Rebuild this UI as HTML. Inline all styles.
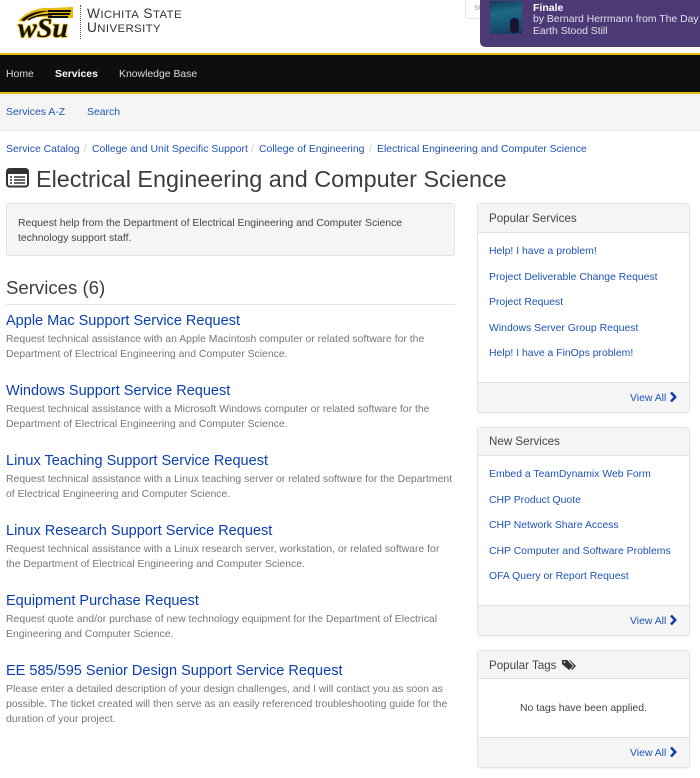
<!DOCTYPE html>
<html><head><meta charset="utf-8"><style>
html,body{margin:0;padding:0;background:#fff}
body{width:700px;height:778px;overflow:hidden;position:relative;font-family:"Liberation Sans",sans-serif;color:#444}
.t{position:absolute;white-space:nowrap;line-height:15px;font-size:10.43px}
.l{color:#1f53b5}
.h{color:#0b3fb0;font-size:14.52px;line-height:18px}
.g{color:#777}
.bt{font-size:11.6px}
.box{position:absolute;left:477px;width:213px;background:#fff;border:1px solid #e2e2e2;border-radius:3px;box-sizing:border-box;box-shadow:0 1px 1px rgba(0,0,0,.05)}
.bh{position:absolute;left:0;right:0;top:0;height:28px;background:#f5f5f5;border-bottom:1px solid #e2e2e2;box-sizing:border-box}
.bf{position:absolute;left:0;right:0;bottom:0;height:30px;background:#f5f5f5;border-top:1px solid #e2e2e2;box-sizing:border-box}
</style></head><body>
<svg style="position:absolute;left:16px;top:5px" width="60" height="40" viewBox="0 0 60 40">
<path d="M2 16C10 7 22 2 34 3L57 2 57 13 34 13C26 11 16 12 8 17Z" fill="#e8b90f"/>
<path d="M5 15C13 8 23 5 33 6C25 7 15 10 8 16Z" fill="#111"/>
<path d="M12 15C20 10 28 9 36 10" stroke="#111" stroke-width="1.6" fill="none"/>
<path d="M32 6h23M32 9h22M32 12h20" stroke="#111" stroke-width="2"/>
<text x="2" y="32" font-family="Liberation Serif,serif" font-weight="bold" font-style="italic" font-size="27" textLength="50" lengthAdjust="spacingAndGlyphs" fill="#111" stroke="#e8b90f" stroke-width="1.6" paint-order="stroke">wSu</text>
</svg>
<div style="position:absolute;left:80px;top:5px;height:34px;border-left:1px dotted #555"></div>
<div class="t" style="left:87px;top:6px;font-size:13.7px;line-height:16px;color:#333;letter-spacing:.4px">W<span style="font-size:11.4px">ICHITA</span> S<span style="font-size:11.4px">TATE</span></div>
<div class="t" style="left:87px;top:20px;font-size:13.7px;line-height:16px;color:#333;letter-spacing:.4px">U<span style="font-size:11.4px">NIVERSITY</span></div>
<div style="position:absolute;left:465px;top:-8px;width:120px;height:27px;border:1px solid #e5e5e5;border-radius:3px;box-sizing:border-box"></div>
<div class="t" style="left:474px;top:1px;font-size:9px;line-height:13px;color:#aaa">sea</div>
<div style="position:absolute;left:480px;top:0;width:220px;height:47px;background:#4c3a76;border-radius:0 0 0 5px"></div>
<div style="position:absolute;left:490px;top:1px;width:32px;height:33px;background:linear-gradient(170deg,#173a55,#1d6a86 35%,#1a5a78 60%,#17375f)"></div>
<div style="position:absolute;left:510px;top:18px;width:9px;height:15px;background:#1b1430;border-radius:4px"></div>
<div class="t" style="left:533px;top:0;font-size:10.5px;line-height:16px;font-weight:bold;color:#fff">Finale</div>
<div class="t" style="left:533px;top:14px;font-size:10.4px;line-height:12px;color:#e4e0ec">by Bernard Herrmann from The Day the</div>
<div class="t" style="left:533px;top:26px;font-size:10.4px;line-height:12px;color:#e4e0ec">Earth Stood Still</div>

<div style="position:absolute;left:0;top:53px;width:700px;height:41px;background:#0e0e0e;border-top:2px solid #e6bd10;border-bottom:2px solid #e6bd10;box-sizing:border-box"></div>
<div class="t" style="left:6px;top:67px;color:#ddd">Home</div>
<div class="t" style="left:55px;top:67px;color:#fff;font-weight:bold">Services</div>
<div class="t" style="left:119px;top:67px;color:#ddd">Knowledge Base</div>
<div style="position:absolute;left:0;top:94px;width:700px;height:37px;background:#f5f5f5;border-bottom:1px solid #e7e7e7;box-sizing:border-box"></div>
<div class="t l" style="left:6px;top:105px">Services A-Z</div>
<div class="t l" style="left:87px;top:105px">Search</div>

<div class="t l" style="left:6px;top:142px">Service Catalog</div>
<div class="t" style="left:84px;top:142px;color:#ccc">/</div>
<div class="t l" style="left:92px;top:142px">College and Unit Specific Support</div>
<div class="t" style="left:251px;top:142px;color:#ccc">/</div>
<div class="t l" style="left:259px;top:142px">College of Engineering</div>
<div class="t" style="left:369px;top:142px;color:#ccc">/</div>
<div class="t l" style="left:377px;top:142px">Electrical Engineering and Computer Science</div>

<svg style="position:absolute;left:6px;top:168px" width="23" height="20" viewBox="0 0 23 20"><rect x="1" y="1" width="21" height="17.5" rx="2.5" fill="#fff" stroke="#333" stroke-width="2"/><rect x="1" y="1" width="21" height="5" fill="#333"/><path d="M4 9h2M8 9h11M4 12h2M8 12h11M4 15h2M8 15h11" stroke="#333" stroke-width="1.6"/></svg>
<div class="t" style="left:36px;top:164px;font-size:23.4px;line-height:30px;color:#3d3d3d">Electrical Engineering and Computer Science</div>

<div style="position:absolute;left:6px;top:203px;width:449px;height:53px;background:#f5f5f5;border:1px solid #e3e3e3;border-radius:3px;box-sizing:border-box"></div>
<div class="t" style="left:18px;top:216px">Request help from the Department of Electrical Engineering and Computer Science</div>
<div class="t" style="left:18px;top:231px">technology support staff.</div>

<div class="t" style="left:6px;top:276px;font-size:18.6px;line-height:24px;color:#3d3d3d">Services (6)</div>
<div style="position:absolute;left:6px;top:304px;width:449px;border-top:1px solid #e5e5e5"></div>

<div class="t h" style="left:6px;top:312px">Apple Mac Support Service Request</div>
<div class="t g" style="left:6px;top:332px">Request technical assistance with an Apple Macintosh computer or related software for the</div>
<div class="t g" style="left:6px;top:347px">Department of Electrical Engineering and Computer Science.</div>

<div class="t h" style="left:6px;top:382px">Windows Support Service Request</div>
<div class="t g" style="left:6px;top:402px">Request technical assistance with a Microsoft Windows computer or related software for the</div>
<div class="t g" style="left:6px;top:417px">Department of Electrical Engineering and Computer Science.</div>

<div class="t h" style="left:6px;top:452px">Linux Teaching Support Service Request</div>
<div class="t g" style="left:6px;top:472px">Request technical assistance with a Linux teaching server or related software for the Department</div>
<div class="t g" style="left:6px;top:487px">of Electrical Engineering and Computer Science.</div>

<div class="t h" style="left:6px;top:522px">Linux Research Support Service Request</div>
<div class="t g" style="left:6px;top:542px">Request technical assistance with a Linux research server, workstation, or related software for</div>
<div class="t g" style="left:6px;top:557px">the Department of Electrical Engineering and Computer Science.</div>

<div class="t h" style="left:6px;top:592px">Equipment Purchase Request</div>
<div class="t g" style="left:6px;top:612px">Request quote and/or purchase of new technology equipment for the Department of Electrical</div>
<div class="t g" style="left:6px;top:627px">Engineering and Computer Science.</div>

<div class="t h" style="left:6px;top:662px">EE 585/595 Senior Design Support Service Request</div>
<div class="t g" style="left:6px;top:682px">Please enter a detailed description of your design challenges, and I will contact you as soon as</div>
<div class="t g" style="left:6px;top:697px">possible. The ticket created will then serve as an easily referenced troubleshooting guide for the</div>
<div class="t g" style="left:6px;top:712px">duration of your project.</div>

<div class="box" style="top:203px;height:210px"><div class="bh" style="height:29px"></div><div class="bf"></div></div>
<div class="t bt" style="left:489px;top:211px">Popular Services</div>
<div class="t l" style="left:489px;top:244px">Help! I have a problem!</div>
<div class="t l" style="left:489px;top:270px">Project Deliverable Change Request</div>
<div class="t l" style="left:489px;top:295px">Project Request</div>
<div class="t l" style="left:489px;top:321px">Windows Server Group Request</div>
<div class="t l" style="left:489px;top:346px">Help! I have a FinOps problem!</div>
<div class="t l" style="left:630px;top:391px">View All</div>
<svg style="position:absolute;left:669px;top:391px" width="8" height="12" viewBox="0 0 8 12"><path d="M2 1.5 6.2 6 2 10.5" fill="none" stroke="#0b3fb0" stroke-width="2.5"/></svg>

<div class="box" style="top:427px;height:209px"><div class="bh"></div><div class="bf"></div></div>
<div class="t bt" style="left:489px;top:434px">New Services</div>
<div class="t l" style="left:489px;top:467px">Embed a TeamDynamix Web Form</div>
<div class="t l" style="left:489px;top:493px">CHP Product Quote</div>
<div class="t l" style="left:489px;top:518px">CHP Network Share Access</div>
<div class="t l" style="left:489px;top:544px">CHP Computer and Software Problems</div>
<div class="t l" style="left:489px;top:569px">OFA Query or Report Request</div>
<div class="t l" style="left:630px;top:614px">View All</div>
<svg style="position:absolute;left:669px;top:614px" width="8" height="12" viewBox="0 0 8 12"><path d="M2 1.5 6.2 6 2 10.5" fill="none" stroke="#0b3fb0" stroke-width="2.5"/></svg>

<div class="box" style="top:650px;height:118px"><div class="bh"></div><div class="bf"></div></div>
<div class="t bt" style="left:489px;top:658px">Popular Tags</div>
<svg style="position:absolute;left:562px;top:659px" width="14" height="12" viewBox="0 0 14 12"><path d="M0 1h5l6 6-4 4-7-6Z" fill="#333"/><path d="M7 1h1l6 6-4 4-1-1 3-3Z" fill="#333"/><circle cx="2.5" cy="3.2" r=".9" fill="#f5f5f5"/></svg>
<div class="t" style="left:520px;top:701px">No tags have been applied.</div>
<div class="t l" style="left:630px;top:746px">View All</div>
<svg style="position:absolute;left:669px;top:746px" width="8" height="12" viewBox="0 0 8 12"><path d="M2 1.5 6.2 6 2 10.5" fill="none" stroke="#0b3fb0" stroke-width="2.5"/></svg>
</body></html>
